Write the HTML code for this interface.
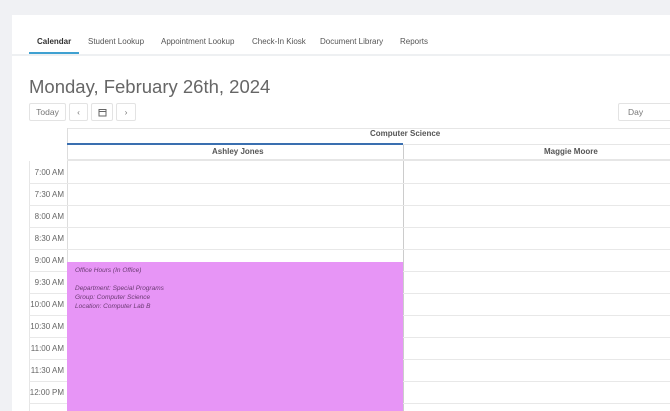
<html style="height:411px;overflow:hidden"><head><style>
body{margin:0;width:670px;height:411px;overflow:hidden;background:#f0f1f4;font-family:"Liberation Sans",sans-serif;position:relative}
.p{position:absolute;left:12px;top:15px;width:658px;height:396px;background:#fff}
.a{position:absolute}
.tab{position:absolute;top:37px;font-size:8px;color:#555}
.btn{position:absolute;top:103px;height:18px;border:1px solid #e3e3e3;border-radius:2px;box-sizing:border-box;color:#777;font-size:8.5px;text-align:center;line-height:16px;background:#fff}
.tl{position:absolute;left:25px;width:39px;text-align:right;font-size:8px;color:#666}
.hl{position:absolute;left:29px;width:650px;height:1px;background:#e8e8e8}
.ev{position:absolute;left:75px;font-size:6.5px;font-style:italic;color:#6a3a72}
</style></head><body>
<div class="p"></div>
<div class="a" style="left:12px;top:54px;width:658px;height:2px;background:#eef0f2"></div>
<div class="tab" style="left:37px;font-weight:bold;color:#333">Calendar</div>
<div class="a" style="left:29px;top:52px;width:50px;height:2px;background:#3fa1d1"></div>
<div class="tab" style="left:88px">Student Lookup</div>
<div class="tab" style="left:161px">Appointment Lookup</div>
<div class="tab" style="left:252px">Check-In Kiosk</div>
<div class="tab" style="left:320px">Document Library</div>
<div class="tab" style="left:400px">Reports</div>
<div class="a" style="left:29px;top:76px;font-size:18.5px;color:#666">Monday, February 26th, 2024</div>
<div class="btn" style="left:29px;width:37px">Today</div>
<div class="btn" style="left:69px;width:19px">&lsaquo;</div>
<div class="btn" style="left:91px;width:22px"><svg width="9" height="9" viewBox="0 0 9 9" style="margin-top:4px"><rect x="1" y="1.5" width="7" height="6.5" fill="none" stroke="#666"/><line x1="1" y1="3.5" x2="8" y2="3.5" stroke="#666"/></svg></div>
<div class="btn" style="left:116px;width:20px">&rsaquo;</div>
<div class="btn" style="left:618px;width:60px;text-align:left;padding-left:9px">Day</div>
<div class="a" style="left:67px;top:128px;width:610px;height:1px;background:#e6e6e6"></div>
<div class="a" style="left:67px;top:128px;width:1px;height:290px;background:#ddd"></div>
<div class="a" style="left:29px;top:161px;width:1px;height:260px;background:#e6e6e6"></div>
<div class="a" style="left:370px;top:129px;font-size:8px;font-weight:bold;color:#555">Computer Science</div>
<div class="a" style="left:67px;top:143px;width:336px;height:2px;background:#3a6fb0"></div>
<div class="a" style="left:403px;top:144px;width:270px;height:1px;background:#e6e6e6"></div>
<div class="a" style="left:403px;top:145px;width:1px;height:270px;background:#ccc"></div>
<div class="a" style="left:212px;top:147px;font-size:8px;font-weight:bold;color:#555">Ashley Jones</div>
<div class="a" style="left:544px;top:147px;font-size:8px;font-weight:bold;color:#555">Maggie Moore</div>
<div class="a" style="left:67px;top:159px;width:610px;height:2px;background:#e6e6e6"></div>
<div class="hl" style="top:183px"></div><div class="hl" style="top:205px"></div><div class="hl" style="top:227px"></div><div class="hl" style="top:249px"></div><div class="hl" style="top:271px"></div><div class="hl" style="top:293px"></div><div class="hl" style="top:315px"></div><div class="hl" style="top:337px"></div><div class="hl" style="top:359px"></div><div class="hl" style="top:381px"></div><div class="hl" style="top:403px"></div>
<div class="tl" style="top:168px">7:00 AM</div>
<div class="tl" style="top:190px">7:30 AM</div>
<div class="tl" style="top:212px">8:00 AM</div>
<div class="tl" style="top:234px">8:30 AM</div>
<div class="tl" style="top:256px">9:00 AM</div>
<div class="tl" style="top:278px">9:30 AM</div>
<div class="tl" style="top:300px">10:00 AM</div>
<div class="tl" style="top:322px">10:30 AM</div>
<div class="tl" style="top:344px">11:00 AM</div>
<div class="tl" style="top:366px">11:30 AM</div>
<div class="tl" style="top:388px">12:00 PM</div>
<div class="a" style="left:67px;top:262px;width:336px;height:150px;background:#e795f6"></div>
<div class="ev" style="top:267px">Office Hours (In Office)</div>
<div class="ev" style="top:285px">Department: Special Programs</div>
<div class="ev" style="top:294px">Group: Computer Science</div>
<div class="ev" style="top:303px">Location: Computer Lab B</div>
</body></html>
